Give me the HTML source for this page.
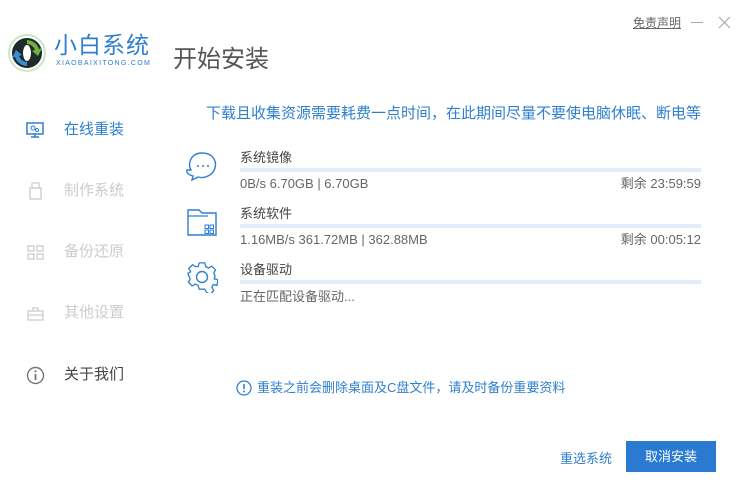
<!DOCTYPE html>
<html><head><meta charset="utf-8"><style>
*{margin:0;padding:0;box-sizing:border-box}
body{width:747px;height:489px;background:#fff;position:relative;overflow:hidden;font-family:"Liberation Sans","Noto Sans CJK SC",sans-serif}
.a{position:absolute;white-space:nowrap}
.bar{position:absolute;left:240px;width:461px;height:4px;background:#e3ecf8}
.g{color:#666;font-size:13px;line-height:16px;height:16px}
.nav{position:absolute;left:64px;font-size:15px;color:#ccc;line-height:20px}
</style></head><body>
<svg class="a" style="left:8px;top:32px" width="40" height="42" viewBox="0 0 40 42">
<circle cx="19" cy="21" r="18" fill="none" stroke="#cfe6c4" stroke-width="2"/>
<circle cx="19" cy="21" r="15" fill="#1f2a2a"/>
<path d="M19 8a13 13 0 0 1 12 9l3-1-4 8-6-5 3-1a9 9 0 0 0-8-6z" fill="#6cb33e"/>
<path d="M19 34a13 13 0 0 1-12-9l-3 1 4-8 6 5-3 1a9 9 0 0 0 8 6z" fill="#3a8fd0"/>
<ellipse cx="19" cy="21" rx="4" ry="8" fill="#fff"/>
</svg>
<div class="a" style="left:54px;top:31px;font-size:23px;line-height:28px;color:#2f7fd0;letter-spacing:1px">小白系统</div>
<div class="a" style="left:56px;top:60px;font-size:7px;color:#2f7fd0;letter-spacing:1.3px">XIAOBAIXITONG.COM</div>
<div class="a" style="left:173px;top:45px;font-size:24px;line-height:30px;color:#555">开始安装</div>
<div class="a" style="left:633px;top:14px;font-size:12px;color:#666;text-decoration:underline">免责声明</div>
<div class="a" style="left:691px;top:22px;width:12px;height:1px;background:#aaa"></div>
<svg class="a" style="left:718px;top:16px" width="13" height="13"><path d="M1 1L12 12M12 1L1 12" stroke="#aaa" stroke-width="1.2"/></svg>

<svg class="a" style="left:26px;top:122px" width="18" height="16" viewBox="0 0 18 16"><rect x="1" y="1" width="16" height="11" fill="none" stroke="#2f7fd0" stroke-width="1.5"/><circle cx="7" cy="6" r="2" fill="none" stroke="#2f7fd0"/><circle cx="11" cy="8" r="1.5" fill="none" stroke="#2f7fd0"/><path d="M9 12v3M5 15h8" stroke="#2f7fd0" stroke-width="1.5"/></svg>
<div class="nav" style="top:120px;color:#2f7fd0">在线重装</div>
<svg class="a" style="left:29px;top:182px" width="13" height="18"><rect x="1" y="6" width="11" height="11" fill="none" stroke="#ccc" stroke-width="1.4"/><rect x="3" y="1" width="7" height="5" fill="none" stroke="#ccc" stroke-width="1.2"/></svg>
<div class="nav" style="top:181px">制作系统</div>
<svg class="a" style="left:27px;top:245px" width="17" height="15"><rect x="1" y="1" width="6" height="5" fill="none" stroke="#ccc" stroke-width="1.3"/><rect x="1" y="9" width="6" height="5" fill="none" stroke="#ccc" stroke-width="1.3"/><rect x="10" y="1" width="6" height="5" fill="none" stroke="#ccc" stroke-width="1.3"/><rect x="10" y="9" width="6" height="5" fill="none" stroke="#ccc" stroke-width="1.3"/></svg>
<div class="nav" style="top:242px">备份还原</div>
<svg class="a" style="left:27px;top:307px" width="17" height="14"><rect x="1" y="4" width="15" height="9" fill="none" stroke="#ccc" stroke-width="1.3"/><path d="M6 4V1h5v3M1 8h15" stroke="#ccc" stroke-width="1.3" fill="none"/></svg>
<div class="nav" style="top:303px">其他设置</div>
<svg class="a" style="left:26px;top:366px" width="19" height="19"><circle cx="9.5" cy="9.5" r="8" fill="none" stroke="#777" stroke-width="1.4"/><path d="M9.5 8v6" stroke="#777" stroke-width="1.8"/><circle cx="9.5" cy="5.3" r="1.1" fill="#777"/></svg>
<div class="nav" style="top:365px;color:#444">关于我们</div>

<div class="a" style="left:206px;top:104px;font-size:15px;line-height:20px;color:#2f7fd0">下载且收集资源需要耗费一点时间，在此期间尽量不要使电脑休眠、断电等</div>

<svg class="a" style="left:185px;top:150px" width="34" height="32" viewBox="0 0 34 32"><path d="M6 20C2 14 6 3 17 3s15 8 13 15-10 11-17 9l-6 3 1-4c-4-1-7-3-6-6z" fill="none" stroke="#2f7fd0" stroke-width="1.4"/><circle cx="13" cy="16" r="1" fill="#2f7fd0"/><circle cx="18" cy="16" r="1" fill="#2f7fd0"/><circle cx="23" cy="16" r="1" fill="#2f7fd0"/></svg>
<div class="a g" style="left:240px;top:150px;color:#444">系统镜像</div>
<div class="bar" style="top:168px"></div>
<div class="a g" style="left:240px;top:176px">0B/s 6.70GB | 6.70GB</div>
<div class="a g" style="right:46px;top:176px">剩余 23:59:59</div>

<svg class="a" style="left:186px;top:207px" width="32" height="30" viewBox="0 0 32 30"><path d="M2 3h11l3 3h14v22H2z" fill="none" stroke="#2f7fd0" stroke-width="1.4"/><path d="M2 9h20" stroke="#2f7fd0" stroke-width="1.2"/><rect x="19" y="18" width="3.5" height="3.5" fill="none" stroke="#2f7fd0"/><rect x="24" y="18" width="3.5" height="3.5" fill="none" stroke="#2f7fd0"/><rect x="19" y="23" width="3.5" height="3.5" fill="none" stroke="#2f7fd0"/><rect x="24" y="23" width="3.5" height="3.5" fill="none" stroke="#2f7fd0"/></svg>
<div class="a g" style="left:240px;top:206px;color:#444">系统软件</div>
<div class="bar" style="top:224px"></div>
<div class="a g" style="left:240px;top:232px">1.16MB/s 361.72MB | 362.88MB</div>
<div class="a g" style="right:46px;top:232px">剩余 00:05:12</div>

<svg class="a" style="left:186px;top:261px" width="32" height="32" viewBox="0 0 32 32"><path d="M13 2h6l1 4 3 1.5 3.5-2 4 4-2 3.5L30 16l-1 3 4 1-1 6-4-1-1.5 3 2 3.5-4 4-3.5-2L19 30h-6l-1-4-3-1.5-3.5 2-4-4 2-3.5L2 16l-1-3 3-1.5-2-3.5 4-4 3.5 2L12 6z" transform="scale(.94) translate(1 0)" fill="none" stroke="#2f7fd0" stroke-width="1.4" stroke-linejoin="round"/><circle cx="16" cy="16" r="5.5" fill="none" stroke="#2f7fd0" stroke-width="1.4"/></svg>
<div class="a g" style="left:240px;top:262px;color:#444">设备驱动</div>
<div class="bar" style="top:280px"></div>
<div class="a g" style="left:240px;top:289px">正在匹配设备驱动...</div>

<svg class="a" style="left:236px;top:380px" width="16" height="16"><circle cx="8" cy="8" r="7" fill="none" stroke="#2f7fd0" stroke-width="1.3"/><path d="M8 4v5" stroke="#2f7fd0" stroke-width="1.6"/><circle cx="8" cy="11.5" r="1" fill="#2f7fd0"/></svg>
<div class="a" style="left:257px;top:379px;font-size:13px;line-height:17px;color:#2f7fd0">重装之前会删除桌面及C盘文件，请及时备份重要资料</div>

<div class="a" style="left:560px;top:450px;font-size:13px;line-height:17px;color:#2f7fd0">重选系统</div>
<div class="a" style="left:626px;top:441px;width:90px;height:31px;background:#2a7ad2;color:#fff;font-size:13px;text-align:center;line-height:31px">取消安装</div>
</body></html>
